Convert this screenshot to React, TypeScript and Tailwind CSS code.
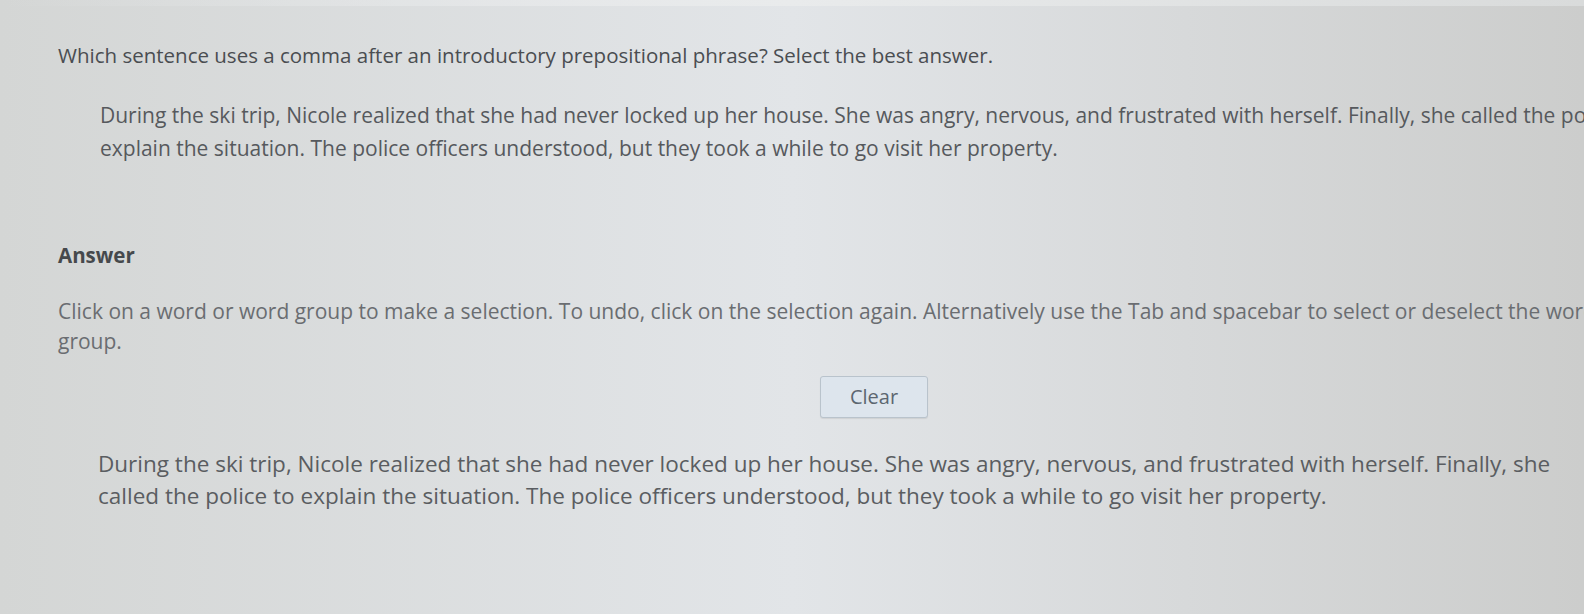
import React from 'react';

const passage =
  'During the ski trip, Nicole realized that she had never locked up her house. She was angry, nervous, and frustrated with herself. Finally, she called the police to explain the situation. The police officers understood, but they took a while to go visit her property.';

export default function App() {
  return (
    <div
      className="h-[614px] w-full overflow-hidden bg-gradient-to-r from-[#d4d6d5] via-[#e2e5e8] to-[#cccdcc] text-[#55585c]"
      style={{ fontFamily: '"Open Sans", "Liberation Sans", sans-serif' }}
    >
      <div className="h-[6px] w-full bg-gradient-to-r from-transparent via-[#e9ebec] to-[#d9dbdb]" />
      <div className="w-[1720px] pl-[58px] pt-[35px]">
        {/* Question */}
        <p className="text-[20.5px] leading-[28px] text-[#4a4d51]">
          Which sentence uses a comma after an introductory prepositional phrase? Select the best answer.
        </p>

        <div className="w-[1622px] pl-[42px] pt-[30px]">
          <p className="text-[21px] leading-[33px] text-[#56595d]">{passage}</p>
        </div>

        {/* Answer */}
        <h2 className="pt-[76px] text-[20.5px] font-bold leading-[28px] text-[#46494c]">Answer</h2>

        <p className="w-[1630px] pt-[27px] text-[21px] leading-[30px] text-[#6a6d71]">
          Click on a word or word group to make a selection. To undo, click on the selection again. Alternatively use the Tab and spacebar to select or deselect the word or word group.
        </p>

        <div className="flex w-[1632px] justify-center pt-[20px]">
          <button className="h-[42px] w-[108px] rounded-[3px] border border-[#b9c3cc] bg-[#dde5ed] text-[20px] text-[#5c6670] shadow-[0_1px_1px_rgba(0,0,0,0.08)]">
            Clear
          </button>
        </div>

        <div className="w-[1500px] pl-[40px] pt-[30px]">
          <p className="text-[22.5px] leading-[32px] text-[#5a5d61]">{passage}</p>
        </div>
      </div>
    </div>
  );
}
